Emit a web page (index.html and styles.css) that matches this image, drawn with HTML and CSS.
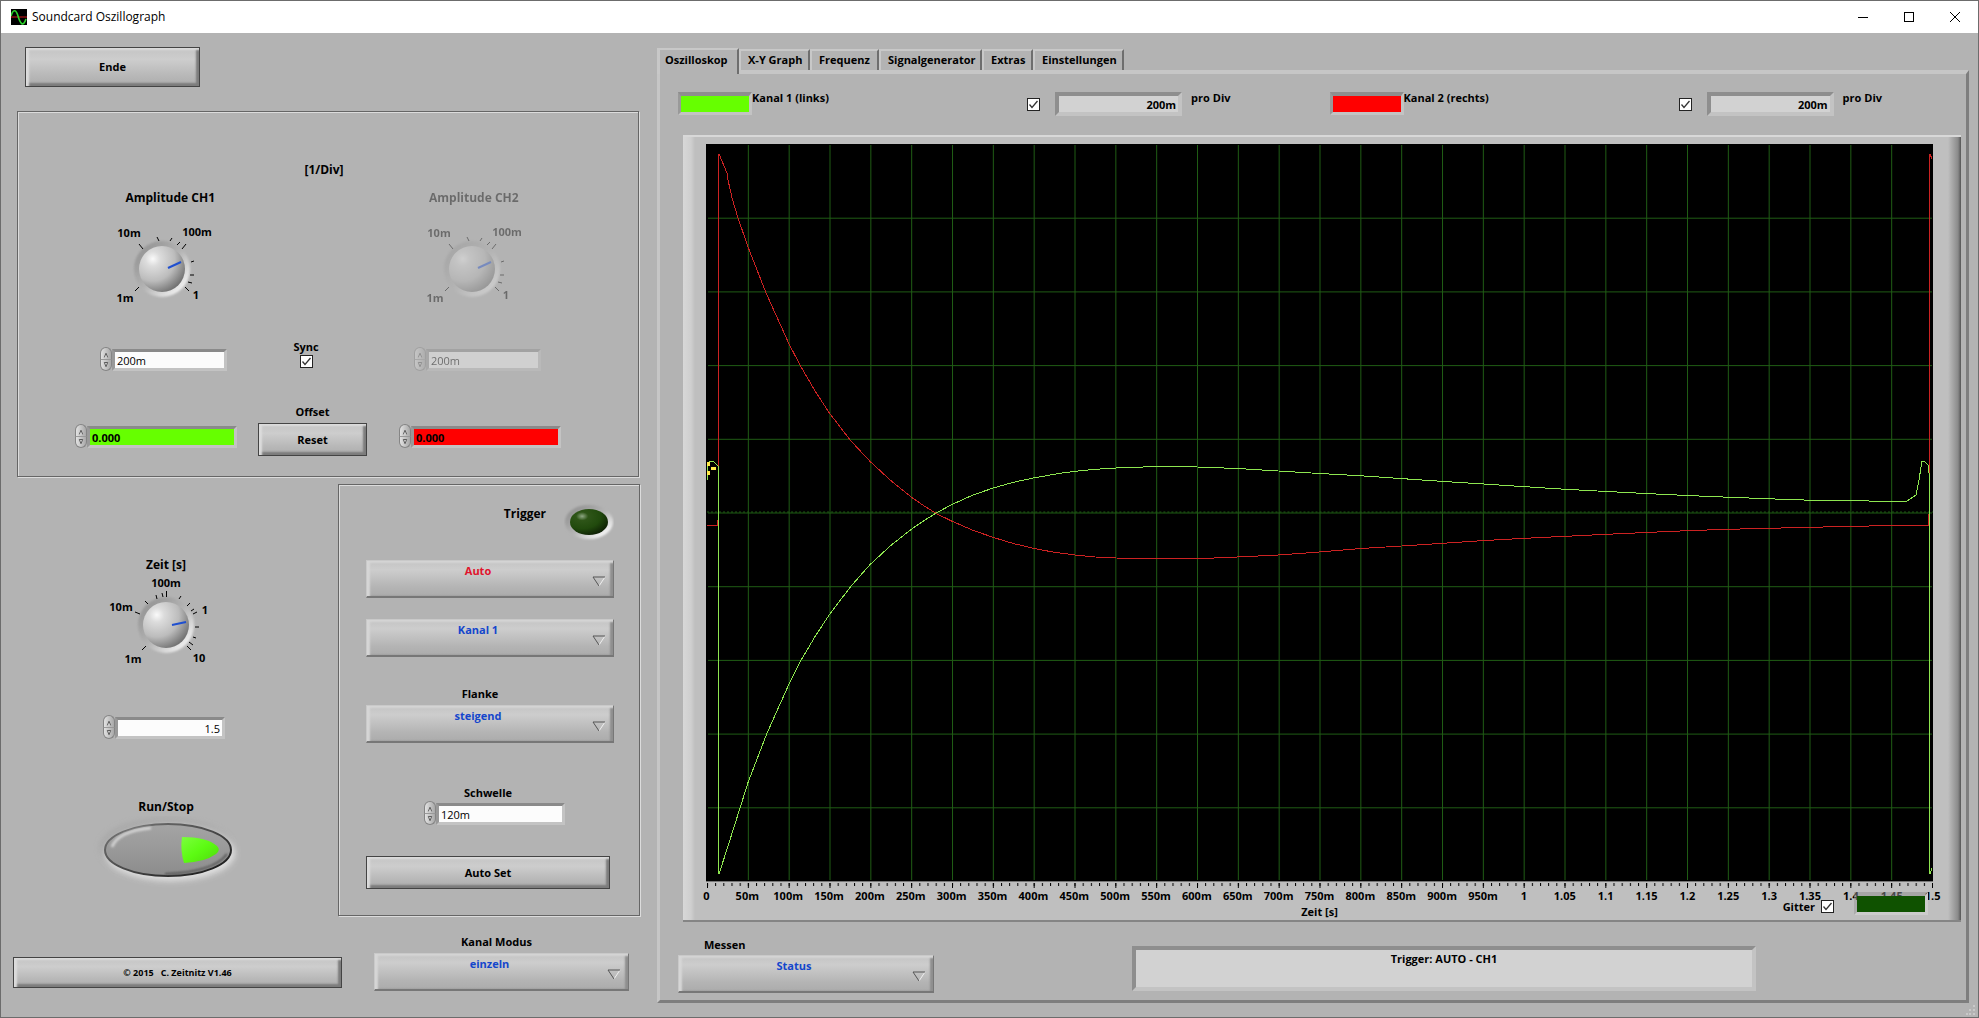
FILE: index.html
```html
<!DOCTYPE html>
<html lang="de">
<head>
<meta charset="utf-8">
<title>Soundcard Oszillograph</title>
<link rel="stylesheet" href="styles.css">
</head>
<body>
<svg class="defs" aria-hidden="true">
  <defs>
    <radialGradient id="ball" cx="30%" cy="28%" r="80%">
      <stop offset="0" stop-color="#fafafa"/><stop offset=".2" stop-color="#dcdcdc"/><stop offset=".6" stop-color="#bcbcbc"/><stop offset="1" stop-color="#6e6e6e"/>
    </radialGradient>
    <linearGradient id="ring" x1="0" y1="0" x2="1" y2="1">
      <stop offset="0.1" stop-color="#8f8f8f"/><stop offset=".5" stop-color="#b3b3b3"/><stop offset=".9" stop-color="#ffffff"/>
    </linearGradient>
    <radialGradient id="led" cx="32%" cy="28%" r="80%">
      <stop offset="0" stop-color="#8fa884"/><stop offset=".2" stop-color="#2e5518"/><stop offset=".6" stop-color="#214a0d"/><stop offset="1" stop-color="#0c1c04"/>
    </radialGradient>
    <linearGradient id="oval" x1="0" y1="0" x2="0" y2="1">
      <stop offset="0" stop-color="#a4a4a4"/><stop offset=".5" stop-color="#999999"/><stop offset="1" stop-color="#8c8c8c"/>
    </linearGradient>
    <linearGradient id="ovalrim" x1="0" y1="0" x2="1" y2="1">
      <stop offset="0" stop-color="#7a7a7a"/><stop offset=".5" stop-color="#4a4a4a"/><stop offset="1" stop-color="#101010"/>
    </linearGradient>
    <linearGradient id="play" x1="0" y1="0" x2="1" y2="1">
      <stop offset="0" stop-color="#7bff3c"/><stop offset=".5" stop-color="#5cfb12"/><stop offset="1" stop-color="#4fd80c"/>
    </linearGradient>
    <filter id="soft" x="-20%" y="-20%" width="140%" height="140%"><feGaussianBlur stdDeviation="3"/></filter>
    <filter id="soft1" x="-20%" y="-20%" width="140%" height="140%"><feGaussianBlur stdDeviation="1"/></filter>
    <symbol id="tick" viewBox="0 0 13 13"><path d="M2.5 6.5 5 9.5 10.5 3" fill="none" stroke="#333" stroke-width="1.3"/></symbol>
    <symbol id="arrow" viewBox="0 0 14 11"><path d="M13 1 7 10" fill="none" stroke="#f0f0f0"/><path d="M7 10 1 1H13" fill="none" stroke="#555"/></symbol>
    <symbol id="up" viewBox="0 0 12 12"><path d="M6 5v5" stroke="#fff"/><path d="M4 10 6 5 8 10" fill="none" stroke="#444"/></symbol>
    <symbol id="down" viewBox="0 0 12 12"><path d="M4 3H8L6 8Z" fill="#ddd" stroke="#444"/></symbol>
    <g id="knob">
      <circle r="28" fill="url(#ring)" opacity=".9" filter="url(#soft1)"/>
      <circle r="23" fill="url(#ball)"/>
    </g>
    <g id="ampscale">
      <use href="#knob" x="50" y="47"/>
      <path d="M56 46 69 40" stroke="#1f4fd0" stroke-width="2"/>
      <path d="M27 22 31 27M45 15 47 19M60 16 58 19M68 20 65 23M74 22 70 27M82 39 79 40M82 53H78M80 61 76 60M77 69 73 65M23 69 27 65" fill="none" stroke="#000"/>
      <g class="scale"><text x="17" y="15">10m</text><text x="85" y="14">100m</text><text x="13" y="80">1m</text><text x="84" y="77">1</text></g>
    </g>
  </defs>
</svg>

<div class="window">
  <header class="titlebar">
    <svg class="appicon" viewBox="0 0 16 16" aria-hidden="true"><rect width="16" height="16"/><path d="M0 8H16" stroke="#d01818"/><path d="M0 7C2 0 5 0 7 7S12 19 15 10" fill="none" stroke="#2bd42b" stroke-width="1.6"/></svg>
    <h1>Soundcard Oszillograph</h1>
    <button class="wbtn" aria-label="Minimieren"><svg width="12" height="12"><path d="M1 6.500H11" stroke="#000"/></svg></button>
    <button class="wbtn" aria-label="Maximieren"><svg width="12" height="12"><rect x="1.500" y="1.500" width="9" height="9" fill="none" stroke="#000"/></svg></button>
    <button class="wbtn" aria-label="Schließen"><svg width="12" height="12"><path d="M1 1 11 11M11 1 1 11" stroke="#000"/></svg></button>
  </header>

  <main>
    <div class="controls">
      <button class="btn end">Ende</button>

      <section class="group amplitude">
        <h2>[1/Div]</h2>
        <div class="titles"><span>Amplitude CH1</span><span class="off">Amplitude CH2</span></div>
        <div class="knobs">
          <svg width="110" height="86" role="img" aria-label="Amplitude CH1"><use href="#ampscale"/></svg>
          <svg class="off" width="110" height="86" role="img" aria-label="Amplitude CH2"><use href="#ampscale"/></svg>
        </div>
        <div class="amps">
          <div class="numeric"><span class="spin"><button aria-label="mehr"><svg><use href="#up"/></svg></button><button aria-label="weniger"><svg><use href="#down"/></svg></button></span><input class="field" aria-label="Amplitude CH1" value="200m"></div>
          <label class="sync">Sync<span class="check"><input type="checkbox" checked><svg><use href="#tick"/></svg></span></label>
          <div class="numeric off"><span class="spin"><button disabled aria-label="mehr"><svg><use href="#up"/></svg></button><button disabled aria-label="weniger"><svg><use href="#down"/></svg></button></span><input class="field" aria-label="Amplitude CH2" value="200m" disabled></div>
        </div>
        <div class="offsets">
          <div class="numeric wide"><span class="spin"><button aria-label="mehr"><svg><use href="#up"/></svg></button><button aria-label="weniger"><svg><use href="#down"/></svg></button></span><input class="field green" aria-label="Offset Kanal 1" value="0.000"></div>
          <div class="reset"><span>Offset</span><button class="btn">Reset</button></div>
          <div class="numeric wide"><span class="spin"><button aria-label="mehr"><svg><use href="#up"/></svg></button><button aria-label="weniger"><svg><use href="#down"/></svg></button></span><input class="field red" aria-label="Offset Kanal 2" value="0.000"></div>
        </div>
      </section>

      <div class="lower">
        <section class="time">
          <h2>Zeit [s]</h2>
          <svg width="122" height="96" viewBox="-6 -4 122 96" role="img" aria-label="Zeit">
            <use href="#knob" x="55" y="49"/>
            <path d="M61 49 75 46" stroke="#1f4fd0" stroke-width="2"/>
            <path d="M55.500 15V21M45 19 46 23M51 17 52 21M70 20 68 23M79 27 76 30M83 33 80 35M86 36 82 38M88 51H84M85 62 82 61M82 69 78 66M80 74 76 70M31 74 35 70M24 36 29 38M34 25 37 28" fill="none" stroke="#000"/>
            <g class="scale"><text x="55" y="11">100m</text><text x="10" y="35">10m</text><text x="94" y="38">1</text><text x="22" y="87">1m</text><text x="88" y="86">10</text></g>
          </svg>
          <div class="numeric right"><span class="spin"><button aria-label="mehr"><svg><use href="#up"/></svg></button><button aria-label="weniger"><svg><use href="#down"/></svg></button></span><input class="field" aria-label="Zeit" value="1.5"></div>
          <h2 class="runlabel">Run/Stop</h2>
          <button class="run" aria-label="Run/Stop">
            <svg width="150" height="72" viewBox="-2 2 150 72">
              <ellipse cx="73" cy="34" rx="66" ry="29" fill="#9c9c9c" filter="url(#soft)" opacity=".6"/>
              <ellipse cx="77" cy="39" rx="65" ry="28" fill="#eee" filter="url(#soft)" opacity=".8"/>
              <ellipse cx="75" cy="36" rx="63" ry="26" fill="url(#oval)" stroke="url(#ovalrim)" stroke-width="2"/>
              <path d="M19 33C23 22 38 16 58 14" fill="none" stroke="#dedede" stroke-width="3" filter="url(#soft1)" opacity=".8"/>
              <path d="M134 40C124 54 98 59 72 60" fill="none" stroke="#555" stroke-width="2" filter="url(#soft1)"/>
              <path d="M89 23Q114 23 124 32Q128 36 123 40Q112 48 91 49Q87 36 89 23Z" fill="url(#play)"/>
            </svg>
          </button>
        </section>

        <section class="group trigger">
          <div class="trighead"><h2>Trigger</h2>
            <svg width="50" height="38" role="img" aria-label="aus"><ellipse cx="25" cy="19" rx="24" ry="17" fill="url(#ring)" filter="url(#soft1)"/><ellipse cx="25" cy="19" rx="19" ry="13" fill="url(#led)"/></svg>
          </div>
          <div class="combo"><select class="redtext" aria-label="Trigger"><option>Auto</option></select><svg><use href="#arrow"/></svg></div>
          <div class="combo"><select aria-label="Triggerkanal"><option>Kanal 1</option></select><svg><use href="#arrow"/></svg></div>
          <label for="edge">Flanke</label>
          <div class="combo"><select id="edge"><option>steigend</option></select><svg><use href="#arrow"/></svg></div>
          <label for="level" class="levellabel">Schwelle</label>
          <div class="numeric level"><span class="spin"><button aria-label="mehr"><svg><use href="#up"/></svg></button><button aria-label="weniger"><svg><use href="#down"/></svg></button></span><input id="level" class="field" value="120m"></div>
          <button class="btn autoset">Auto Set</button>
        </section>
      </div>

      <footer class="bottom">
        <button class="btn about">© 2015 &nbsp; C. Zeitnitz V1.46</button>
        <div class="mode"><label for="mode">Kanal Modus</label>
          <div class="combo"><select id="mode"><option>einzeln</option></select><svg><use href="#arrow"/></svg></div></div>
      </footer>
    </div>

    <div class="display">
      <nav class="tabs" role="tablist">
        <button role="tab" class="active" aria-selected="true">Oszilloskop</button><button role="tab">X-Y Graph</button><button role="tab">Frequenz</button><button role="tab">Signalgenerator</button><button role="tab">Extras</button><button role="tab">Einstellungen</button>
      </nav>
      <section class="panel">
        <div class="legend">
          <div class="channel"><span class="swatch green"></span><span class="name">Kanal 1 (links)</span><span class="check"><input type="checkbox" checked aria-label="Kanal 1 (links)"><svg><use href="#tick"/></svg></span><output>200m</output><span>pro Div</span></div>
          <div class="channel"><span class="swatch red"></span><span class="name">Kanal 2 (rechts)</span><span class="check"><input type="checkbox" checked aria-label="Kanal 2 (rechts)"><svg><use href="#tick"/></svg></span><output>200m</output><span>pro Div</span></div>
        </div>

        <div class="graph">
          <svg class="plot" viewBox="0 0 1226 737" preserveAspectRatio="none" role="img" aria-label="Signalverlauf">
            <defs><pattern id="grid" x="1" y="0" width="40.800" height="73.700" patternUnits="userSpaceOnUse"><path d="M0 0V74M0 0H41" stroke="#1f5c14" stroke-width="2"/></pattern></defs>
            <rect width="1226" height="737"/>
            <rect x="2" y="1" width="1223" height="735" fill="url(#grid)"/>
            <path d="M1 368H1226" stroke="#1f5c14" stroke-dasharray="2 2"/>
            <polyline class="trace ch2" points="1,381 12,381 13,10 21,29 22,36 26,54 32,74 42,103 60,149 83,200 95,223 109,247 123,268.6 144,296 164,317.5 184,336 205,353 218,362 231,370 246,377.3 266,386 287,393.4 307,399.5 328,404.5 348,408.3 369,411 389,413 410,414 455,415 491,414.7 531,413 572,411 613,408 655,404.5 695,402 736,399.3 777,396.6 818,394.3 859,392.3 900,390.3 939,388.5 980,386.7 1021,385.3 1062,384.3 1103,383.3 1144,382.4 1185,381.5 1222,381.5 1223,10 1225,15"/>
            <polyline class="trace ch1" points="1,336 1,320 5,317 8,318 12,322 13,730 22,702 34,664 42,638.5 61,589 83,540 95,516 109,492.500 123,471 145,442 164,420.5 184,402 205,385.4 218,376.500 230,369 246,360.4 266,351.300 287,344 307,338.300 328,333.8 354,329.3 369,327.3 389,325.300 410,324 450,322.5 491,323 531,324.5 572,327 613,329.5 655,331.8 695,334.6 736,337.4 777,340 818,342.7 859,345.3 900,347.5 939,349.5 980,351.5 1021,353.2 1062,354.8 1103,356.2 1144,356.7 1185,357.4 1200,357 1209,351 1212,336 1215,317 1218,318 1222,322 1223,730 1225,724"/>
            <path d="M1 318h3v4h-3zM1 327h3v4h-3zM5 323h5v3h-5z" fill="#ffe94a"/>
          </svg>
          <svg class="ticks" viewBox="0 0 1226 7" preserveAspectRatio="none" aria-hidden="true">
            <defs>
              <pattern id="minor" x="1" y="0" width="8.160" height="7" patternUnits="userSpaceOnUse"><path d="M.500 2V5" stroke="#000"/></pattern>
              <pattern id="major" x="1" y="0" width="40.800" height="7" patternUnits="userSpaceOnUse"><path d="M.500 2V7" stroke="#000"/></pattern>
            </defs>
            <rect width="1226" height="1" fill="#777"/><rect width="1226" height="7" fill="url(#minor)"/><rect width="1226" height="7" fill="url(#major)"/>
          </svg>
          <div class="axis"><span>0</span><span>50m</span><span>100m</span><span>150m</span><span>200m</span><span>250m</span><span>300m</span><span>350m</span><span>400m</span><span>450m</span><span>500m</span><span>550m</span><span>600m</span><span>650m</span><span>700m</span><span>750m</span><span>800m</span><span>850m</span><span>900m</span><span>950m</span><span>1</span><span>1.05</span><span>1.1</span><span>1.15</span><span>1.2</span><span>1.25</span><span>1.3</span><span>1.35</span><span>1.4</span><span>1.45</span><span>1.5</span></div>
          <div class="axisname">Zeit [s]</div>
          <div class="gridbox"><label for="gitter">Gitter</label><span class="check"><input id="gitter" type="checkbox" checked><svg><use href="#tick"/></svg></span><span class="swatch dark"></span></div>
        </div>

        <div class="statusrow">
          <div class="measure"><label for="measure">Messen</label>
            <div class="combo"><select id="measure"><option>Status</option></select><svg><use href="#arrow"/></svg></div></div>
          <output class="status">Trigger: AUTO - CH1</output>
        </div>
      </section>
      <svg class="grip" width="10" height="10" aria-hidden="true"><path d="M7 0h2v2h-2zM3 4h2v2h-2zM7 4h2v2h-2zM0 8h2v2h-2zM3 8h2v2h-2zM7 8h2v2h-2z" fill="#c9c9c9"/></svg>
    </div>
  </main>
</div>
</body>
</html>
```
FILE: styles.css
```css
* { box-sizing: border-box; }

body {
  margin: 0;
  background: #b3b3b3;
  color: #000;
  font: 700 11px/16px "Open Sans", "Noto Sans", sans-serif;
}

h1, h2 { margin: 0; font-size: 12px; line-height: 18px; font-weight: 700; }
button, input, select { margin: 0; padding: 0; font: inherit; color: inherit; }
svg { display: block; }
.defs { position: absolute; width: 0; height: 0; }
.off { opacity: .4; }

.window {
  display: flex;
  flex-direction: column;
  min-height: 100vh;
  border: 1px solid #6c6c6c;
}

.titlebar {
  display: flex;
  align-items: center;
  height: 32px;
  padding-left: 10px;
  background: #fff;
}
.titlebar h1 { flex: 1; padding-left: 5px; font-weight: 400; }
.appicon { width: 16px; height: 16px; }
.wbtn {
  display: grid;
  place-items: center;
  width: 46px;
  height: 30px;
  border: 0;
  background: none;
}

main { display: flex; flex: 1; }
.controls { flex: 0 0 656px; padding-top: 14px; }

/* Raised push buttons */
.btn {
  height: 33px;
  border: 1px solid #444;
  background: linear-gradient(#c4c4c4, #cdcdcd 30%, #b9b9b9 70%, #acacac);
  box-shadow: inset 3px 2px 2px #dcdcdc, inset -3px -3px 2px #7c7c7c;
}
.end { display: block; width: 175px; height: 40px; margin-left: 24px; }

.group {
  border: 1px solid #666;
  box-shadow: 1px 1px 0 #dcdcdc, inset 1px 1px 0 #dcdcdc;
}

/* Numeric entry with an oval increment control */
.numeric { display: flex; align-items: flex-end; width: 127px; height: 24px; }
.spin { flex: 0 0 12px; height: 24px; }
.spin button {
  display: block;
  width: 12px;
  height: 12px;
  border: 1px solid #858585;
  border-bottom-width: 0;
  border-radius: 6px 6px 0 0;
  background: linear-gradient(90deg, #e2e2e2, #a8a8a8);
}
.spin button + button { border-width: 0 1px 1px; border-radius: 0 0 6px 6px; border-top: 1px solid #999; }
.spin svg { width: 10px; height: 10px; }
.field {
  flex: 1;
  min-width: 0;
  height: 22px;
  border: solid;
  border-width: 3px;
  border-color: #8a8a8a #c3c3c3 #c3c3c3 #999;
  border-radius: 0;
  padding: 0 2px;
  background: #fcfcfc;
  font-weight: 400;
}
.field.green, .field.red { font-weight: 700; }
.green { background: #66ff00; }
.red { background: #ff0000; }
.dark { background: #0f5200; }
.wide { width: 162px; }
.right { width: 122px; }
.right .field { text-align: right; }

.check { position: relative; flex: none; width: 13px; height: 13px; }
.check input {
  display: block;
  width: 13px;
  height: 13px;
  appearance: none;
  border: 1px solid #222;
  background: #fff;
}
.check svg { position: absolute; inset: 0; width: 13px; height: 13px; pointer-events: none; visibility: hidden; }
.check input:checked + svg { visibility: visible; }

/* Drop-down lists */
.combo { position: relative; }
.combo select {
  display: block;
  width: 100%;
  height: 38px;
  padding: 0 24px 15px 0;
  appearance: none;
  border: solid;
  border-width: 1px 1px 2px 1px;
  border-color: #c9c9c9 #777 #777 #c9c9c9;
  border-radius: 0;
  background: linear-gradient(#c4c4c4, #cdcdcd 25%, #b4b4b4 75%, #acacac);
  box-shadow: inset 3px 2px 2px #d6d6d6, inset -3px 0 2px #8e8e8e;
  color: #1446cc;
  text-align: center;
  text-align-last: center;
}
.combo .redtext { color: #e0142c; }
.combo svg { position: absolute; right: 8px; top: 16px; width: 14px; height: 11px; pointer-events: none; }

.scale text { text-anchor: middle; }

.amplitude { width: 622px; margin: 24px 0 0 16px; padding: 49px 0 20px; }
.amplitude h2 { padding-right: 8px; text-align: center; }
.titles, .knobs { display: flex; justify-content: center; padding-right: 12px; }
.titles { gap: 214px; margin-top: 10px; font-size: 12px; line-height: 18px; white-space: nowrap; }
.knobs { gap: 200px; margin-top: 15px; }
.amps { display: flex; align-items: flex-end; margin-top: 31px; padding-left: 82px; }
.sync { display: flex; flex-direction: column; align-items: center; width: 158px; height: 32px; margin-right: 29px; }
.offsets { display: flex; margin-top: 33px; padding-left: 57px; }
.offsets .numeric { margin-top: 20px; }
.reset { display: flex; flex-direction: column; gap: 3px; width: 109px; margin: 0 32px 0 21px; text-align: center; }

.lower { display: flex; gap: 7px; margin-top: 7px; }
.time { display: flex; flex-direction: column; align-items: center; width: 330px; padding-top: 72px; }
.time > svg { flex: none; margin-top: -2px; }
.time .numeric { margin: 47px 4px 0 0; }
.runlabel { margin-top: 59px; }
.run { border: 0; background: none; }

.trigger { display: flex; flex-direction: column; width: 302px; padding: 18px 25px 26px 27px; }
.trigger > label { margin-top: 29px; padding: 0 20px 3px 0; text-align: center; }
.trighead { display: flex; justify-content: flex-end; gap: 18px; margin-bottom: 19px; }
.trighead h2 { padding-top: 2px; }
.trighead + .combo { margin-bottom: 21px; }
.trigger > .levellabel { margin-top: 42px; padding: 0 4px 0 0; }
.level { align-self: flex-end; width: 141px; margin-right: 49px; }
.autoset { width: 244px; margin-top: 31px; }

.bottom { display: flex; align-items: flex-end; gap: 32px; margin-top: 18px; padding-left: 12px; }
.about { width: 329px; height: 31px; margin-bottom: 3px; font-size: 9px; }
.mode { display: flex; flex-direction: column; gap: 3px; width: 255px; }
.mode label { padding-right: 10px; text-align: center; }

/* Tabbed display */
.display { position: relative; display: flex; flex: 1; flex-direction: column; min-width: 0; padding: 15px 9px 14px 0; }
.tabs { display: grid; grid-template-columns: 82px 71px 69px 103px 51px 91px; height: 22px; align-items: end; }
.tabs button {
  height: 21px;
  padding: 0 0 2px 7px;
  border: solid;
  border-width: 2px 2px 0 2px;
  border-color: #c8c8c8 #6e6e6e #c8c8c8 #c8c8c8;
  background: #b3b3b3;
  text-align: left;
  white-space: nowrap;
}
.tabs .active { position: relative; z-index: 1; height: 26px; margin-bottom: -4px; padding: 0 0 5px 5px; border-left-width: 3px; }
.panel {
  display: flex;
  flex: 1;
  flex-direction: column;
  border: 4px solid;
  border-width: 4px 3px 3px;
  border-color: #c6c6c6 #7e7e7e #7e7e7e #c6c6c6;
  padding: 18px 5px 7px 18px;
}
.legend { display: flex; gap: 99px; height: 24px; padding-right: 79px; }
.channel { display: flex; flex: 1; line-height: 12px; white-space: nowrap; }
.channel .name { flex: 1; }
.channel .check { margin: 6px 15px 0 0; }
.swatch { width: 74px; height: 23px; border: 3px solid; border-width: 4px 3px 3px; border-color: #8e8e8e #c3c3c3 #c3c3c3 #999; background-clip: padding-box; }
.channel output, .status { border: 4px solid; border-color: #8e8e8e #c3c3c3 #c3c3c3 #8e8e8e; background: #d2d2d2; }
.channel output { width: 127px; height: 24px; margin-right: 9px; padding-right: 2px; line-height: 18px; text-align: right; }

.graph {
  position: relative;
  display: flex;
  flex: 1;
  flex-direction: column;
  margin: 19px 0 0 5px;
  border-top: 2px solid #d8d8d8;
  border-bottom: 2px solid #858585;
  padding: 7px 28px 0 23px;
  background: linear-gradient(90deg, #d8d8d8, #cfcfcf 8px, #bfbfbf 12px, #bfbfbf calc(100% - 13px), #8a8a8a calc(100% - 3px), #555);
}
.plot { flex: 1 1 0; width: 100%; height: 0; min-height: 400px; }
.trace { fill: none; stroke-width: 1; vector-effect: non-scaling-stroke; shape-rendering: crispEdges; }
.ch1 { stroke: #8ee650; }
.ch2 { stroke: #cc2222; }
.ticks { width: 100%; height: 7px; }
.axis { display: grid; grid-template-columns: repeat(31, minmax(0, 1fr)); margin: 0 -20px; white-space: nowrap; }
.axis span { display: flex; justify-content: center; }
.axisname { height: 16px; text-align: center; }
.gridbox { position: absolute; right: 33px; bottom: 5px; display: flex; align-items: flex-end; gap: 6px; }
.gridbox .check { margin-bottom: 2px; }
.gridbox .swatch { margin-left: 14px; border-color: #8e8e8e80 #ccc #ccc #99999980; }

.statusrow { display: flex; padding-top: 15px; }
.measure { display: flex; flex: 0 0 256px; flex-direction: column; gap: 2px; margin-right: 198px; }
.measure label { padding-left: 26px; }
.status { flex: 0 1 624px; height: 45px; margin-top: 9px; text-align: center; line-height: 18px; }
.grip { position: absolute; right: 2px; bottom: 2px; }
```
